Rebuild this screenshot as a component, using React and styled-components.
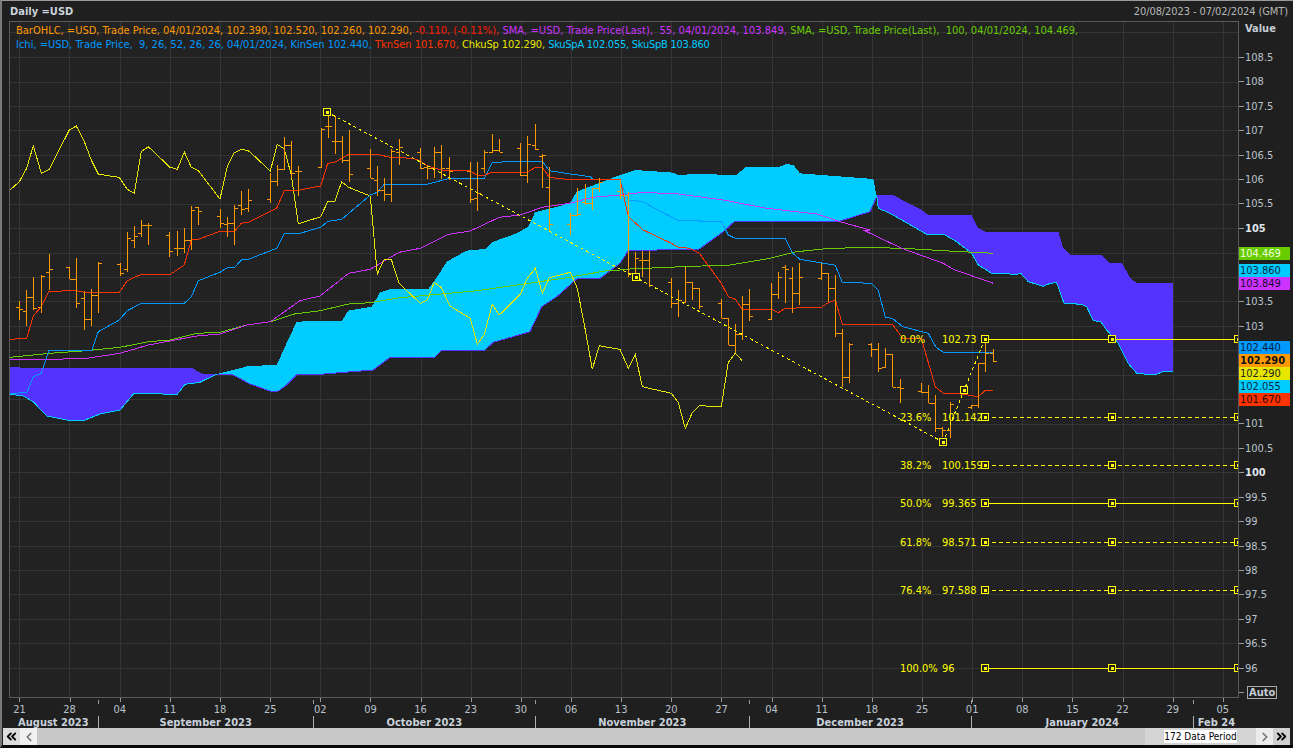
import React from 'react';
import styled, { createGlobalStyle } from 'styled-components';
import { ChevronLeft, ChevronRight, ChevronsLeft, ChevronsRight } from 'lucide-react';

const FONT = '"DejaVu Sans Condensed", "DejaVu Sans", sans-serif';
const ORANGE = '#ff9900';
const RED = '#ff3300';
const YELLOW = '#e6e600';
const BLUE = '#0099ff';
const CYAN = '#00ccff';
const VIOLET = '#cc33ff';
const GREEN = '#66cc00';
const CLOUD = '#5533ff';
const HANDLE = '#ffff00';

// the points were read off 3x crops, so each group has its own origin
const crop = (ox, oy) => (pts) => pts.map(([x, y]) => [x / 3 + ox, y / 3 + oy]);
const a = crop(0, 100);
const b = crop(300, 100);
const c = crop(610, 160);
const d = crop(830, 230);
const e = crop(870, 185);
const f = crop(1100, 230);

const priceY = (p) => 325.8 + (103 - p) * 48.85;
const toPath = (pts) => pts.map(([x, y], i) => `${i ? 'L' : 'M'}${x.toFixed(1)} ${y.toFixed(1)}`).join(' ');

const chikou = [
  ...a([[30, 270], [58, 245], [80, 205], [100, 137], [124, 220], [148, 208], [208, 90], [229, 78], [253, 125], [274, 180], [295, 222], [330, 228], [358, 232], [382, 268], [403, 280], [424, 155], [445, 140], [510, 202], [532, 208], [553, 156], [574, 202], [595, 212], [660, 297], [682, 200], [703, 158], [724, 148], [745, 152], [765, 170], [811, 213], [832, 133], [853, 147], [874, 225], [895, 372]]),
  ...b([[0, 370], [62, 350], [83, 305], [104, 305], [125, 245], [146, 262], [211, 288], [232, 522], [253, 477], [274, 478], [297, 550], [361, 610], [382, 600], [403, 547], [424, 563], [450, 618], [511, 655], [532, 733], [553, 703], [577, 613], [598, 645], [661, 583], [682, 535], [706, 505], [727, 580], [748, 533], [811, 517], [832, 565], [856, 690], [877, 808], [898, 737]]),
  ...c([[0, 563], [30, 568], [55, 625], [76, 583], [97, 680], [184, 700], [205, 728], [226, 805], [247, 758], [268, 737], [334, 740], [355, 607], [376, 580], [397, 602]]),
];

const kijun = [
  ...a([[30, 880], [80, 878], [100, 830], [124, 820], [146, 752], [275, 752], [295, 695], [358, 660], [382, 632], [424, 610], [553, 610], [574, 590], [595, 542], [660, 517], [682, 503], [703, 503], [724, 480], [745, 478], [830, 445], [853, 400], [900, 400]]),
  ...b([[0, 400], [62, 382], [83, 364], [125, 358], [211, 285], [232, 277], [253, 253], [382, 253], [430, 240], [448, 235], [553, 235], [577, 187], [598, 187], [630, 184], [727, 184], [748, 212], [811, 222], [870, 230], [880, 238]]),
  ...c([[30, 60], [55, 120], [97, 125], [205, 182], [334, 184], [355, 225], [376, 235], [526, 235], [548, 280], [570, 298], [676, 316], [697, 367]]),
  ...d([[37, 157], [124, 160], [145, 180], [166, 262], [187, 265], [218, 290], [295, 310], [318, 352], [340, 367], [490, 368]]),
];

const tenkan = [
  ...a([[30, 718], [80, 715], [100, 648], [124, 620], [146, 574], [230, 572], [253, 577], [358, 577], [382, 542], [424, 523], [511, 523], [553, 495], [574, 420], [595, 418], [660, 394], [703, 394], [724, 370], [745, 367], [830, 325], [853, 272], [900, 270]]),
  ...b([[0, 270], [62, 258], [83, 190], [104, 187], [146, 163], [232, 163], [270, 172], [340, 175], [361, 183], [382, 198], [424, 210], [511, 213], [532, 226], [553, 226], [577, 216], [682, 216], [706, 202], [727, 202], [748, 232], [800, 238], [960, 238]]),
  ...c([[30, 58], [55, 170], [100, 210], [184, 250], [205, 262], [240, 265], [268, 280], [334, 370], [355, 410], [376, 418], [397, 448], [484, 448], [505, 458], [526, 445], [634, 442], [655, 428], [676, 420], [697, 493]]),
  ...d([[37, 283], [187, 283], [218, 325], [274, 325], [316, 470], [340, 490], [380, 490], [445, 500], [466, 481], [490, 481]]),
];

const sma55 = [
  ...a([[30, 778], [90, 780], [260, 775], [360, 760], [445, 735], [590, 708], [660, 702], [740, 675], [811, 665], [900, 602]]),
  ...b([[0, 602], [60, 588], [146, 520], [211, 508], [297, 457], [361, 445], [446, 403], [511, 393], [598, 352], [661, 345], [727, 322], [811, 310], [877, 292], [960, 285]]),
  ...c([[90, 98], [190, 100], [340, 120], [470, 145], [620, 162], [690, 185], [780, 210]]),
  ...d([[100, 0], [215, 55], [340, 100], [370, 118], [490, 160]]),
];

const sma100 = [
  ...a([[30, 772], [150, 760], [260, 752], [360, 742], [445, 725], [511, 720], [590, 700], [660, 697], [740, 675], [811, 665], [890, 640]]),
  ...b([[0, 640], [60, 632], [146, 612], [211, 608], [300, 593], [532, 572], [790, 535], [920, 512], [960, 510]]),
  ...c([[60, 327], [216, 320], [360, 315], [480, 295], [560, 275], [660, 265], [810, 262]]),
  ...d([[90, 52], [220, 55], [340, 62], [490, 70]]),
];

const cloudOneTop = a([[10, 800], [70, 803], [575, 803], [590, 812], [610, 822], [650, 822]]);
const cloudOneBottom = a([[10, 880], [70, 888], [100, 905], [140, 948], [200, 960], [255, 960], [300, 942], [360, 930], [400, 882], [460, 880], [530, 885], [555, 853], [600, 847], [650, 822]]);

const cloudTwoTop = [
  ...a([[650, 822], [700, 810], [745, 798], [830, 795], [855, 740], [890, 665], [960, 663]]),
  ...b([[125, 663], [145, 632], [215, 620], [240, 578], [270, 567], [385, 567], [412, 530], [440, 485], [500, 452], [555, 447], [580, 425], [650, 400], [685, 380], [705, 337], [810, 310], [830, 275], [960, 225]]),
  ...c([[75, 30], [190, 38], [205, 45], [260, 42], [380, 45], [405, 22], [510, 20], [530, 12], [550, 15], [570, 40], [790, 57], [800, 110]]),
];
const cloudTwoBottom = [
  ...a([[650, 822], [700, 825], [750, 852], [810, 873], [835, 873], [860, 855], [890, 825], [960, 823]]),
  ...b([[220, 810], [270, 772], [405, 772], [425, 750], [555, 750], [580, 727], [690, 695], [725, 620], [770, 590], [830, 537], [900, 535], [960, 490]]),
  ...c([[55, 272], [268, 267], [340, 215], [375, 183], [690, 183], [780, 155], [800, 110]]),
];

const cloudThreeTop = [
  ...e([[20, 30], [70, 30], [100, 47], [155, 75], [175, 90], [305, 90], [325, 130], [345, 140], [565, 140], [580, 190], [600, 210], [695, 210], [720, 235]]),
  ...f([[20, 98], [65, 98], [90, 143], [108, 158], [218, 158], [218, 424]]),
];
const cloudThreeBottom = [
  ...e([[20, 30], [25, 70], [60, 85], [170, 148], [225, 150], [260, 170], [305, 205], [325, 240], [365, 265], [415, 266], [435, 270], [452, 265], [475, 290], [520, 304], [540, 295], [560, 293], [582, 355], [635, 358], [650, 365], [670, 407], [692, 410], [715, 442]]),
  ...f([[20, 300], [55, 340], [85, 400], [110, 430], [165, 435], [190, 424], [218, 424]]),
];

// x, high, low, open, close
const bars = [
  ...[
    [58, 603, 660, 620, 628], [79, 570, 678, 632, 590], [100, 530, 630, 590, 625], [124, 525, 640, 622, 527], [146, 462, 570, 517, 508],
    [208, 502, 537, 502, 537], [229, 474, 623, 537, 610], [253, 573, 690, 595, 658], [274, 566, 678, 658, 586], [295, 487, 638, 586, 490],
    [360, 490, 527, 492, 518], [382, 396, 515, 508, 415], [403, 378, 443, 421, 408], [424, 360, 412, 400, 375], [445, 370, 435, 375, 376],
    [508, 396, 470, 406, 454], [532, 393, 468, 445, 445], [553, 385, 460, 445, 420], [574, 318, 450, 420, 330], [595, 322, 375, 322, 332],
    [661, 327, 383, 347, 368], [682, 350, 410, 372, 368], [703, 315, 435, 368, 325], [724, 273, 345, 316, 328], [745, 267, 335, 325, 300],
    [811, 220, 308, 298, 244], [832, 195, 258, 244, 208], [853, 112, 210, 206, 135], [874, 123, 235, 135, 220], [895, 198, 288, 212, 212],
  ].map(([x, ...r]) => [x / 3, ...r.map((v) => v / 3 + 100)]),
  ...[
    [62, 85, 200, 200, 88], [83, 45, 115, 78, 78], [104, 48, 162, 123, 123], [125, 108, 188, 122, 180], [146, 90, 245, 180, 223],
    [211, 147, 233, 205, 233], [232, 198, 287, 240, 270], [253, 235, 302, 270, 282], [274, 148, 305, 282, 152], [297, 118, 195, 155, 140],
    [361, 145, 208, 155, 205], [382, 195, 236, 200, 205], [403, 140, 235, 205, 157], [424, 135, 238, 157, 205], [448, 170, 240, 205, 212],
    [511, 186, 308, 212, 297], [532, 186, 332, 295, 280], [553, 150, 220, 205, 155], [577, 102, 160, 155, 150], [598, 117, 157, 150, 155],
    [661, 130, 228, 145, 225], [682, 108, 250, 225, 132], [706, 72, 150, 135, 148], [727, 162, 265, 168, 165], [748, 202, 395, 260, 372],
    [811, 340, 405, 372, 345], [832, 265, 345, 345, 342], [856, 252, 315, 305, 310], [877, 265, 330, 310, 265], [898, 235, 275, 265, 245],
  ].map(([x, ...r]) => [x / 3 + 300, ...r.map((v) => v / 3 + 100)]),
  ...[
    [30, 60, 118, 92, 105], [55, 95, 350, 105, 340], [76, 275, 360, 340, 295], [97, 272, 350, 300, 300], [118, 272, 380, 300, 375],
    [184, 355, 443, 365, 430], [205, 390, 472, 430, 420], [226, 320, 430, 425, 367], [247, 367, 420, 367, 385], [268, 385, 447, 385, 437],
    [334, 418, 475, 430, 475], [355, 478, 555, 475, 555], [376, 492, 580, 555, 523], [397, 408, 540, 523, 432], [418, 388, 482, 432, 467],
    [484, 370, 478, 478, 403], [505, 337, 418, 403, 352], [526, 316, 430, 322, 328], [547, 322, 460, 355, 398], [568, 310, 435, 398, 352],
    [634, 310, 360, 355, 338], [655, 338, 425, 338, 383], [676, 345, 530, 383, 520], [697, 508, 680, 520, 650], [718, 550, 668, 650, 553],
  ].map(([x, ...r]) => [x / 3 + 610, ...r.map((v) => v / 3 + 160)]),
  ...[
    [124, 340, 380, 342, 357], [145, 340, 425, 357, 413], [166, 353, 412, 410, 372], [187, 372, 472, 372, 470], [211, 448, 518, 470, 475],
    [274, 460, 490, 482, 485], [295, 465, 518, 485, 518], [316, 495, 607, 518, 595], [337, 590, 620, 595, 600], [361, 515, 625, 600, 522],
    [424, 525, 537, 530, 525], [445, 400, 533, 525, 400], [466, 340, 425, 400, 368], [490, 357, 395, 370, 392],
  ].map(([x, ...r]) => [x / 3 + 830, ...r.map((v) => v / 3 + 230)]),
];

const barPath = bars
  .map(([x, hi, lo, o, cl]) => {
    const px = Math.round(x) + 0.5;
    const oy = Math.round(o) + 0.5;
    const cy = Math.round(cl) + 0.5;
    return `M${px} ${hi.toFixed(0)}V${lo.toFixed(0)}M${px - 3.5} ${oy}H${px}M${px} ${cy}H${px + 3.5}`;
  })
  .join('');

const fibLevels = [
  { pct: '0.0%', value: '102.73', price: 102.73, solid: true },
  { pct: '23.6%', value: '101.142', price: 101.142 },
  { pct: '38.2%', value: '100.159', price: 100.159 },
  { pct: '50.0%', value: '99.365', price: 99.365, solid: true },
  { pct: '61.8%', value: '98.571', price: 98.571 },
  { pct: '76.4%', value: '97.588', price: 97.588 },
  { pct: '100.0%', value: '96', price: 96, solid: true },
];

// the price tags sit where 104.5, 104, 102.5, 102 and 101.5 would be
const tickValues = ['108.5', '108', '107.5', '107', '106.5', '106', '105.5', '105', '', '', '103.5', '103', '', '', '', '101', '100.5', '100', '99.5', '99', '98.5', '98', '97.5', '97', '96.5', '96'];
const dayLabels = ['21', '28', '04', '11', '18', '25', '02', '09', '16', '23', '30', '06', '13', '20', '27', '04', '11', '18', '25', '01', '08', '15', '22', '29', '05'];
const months = [
  { name: 'August 2023', width: 89.7 },
  { name: 'September 2023', width: 215 },
  { name: 'October 2023', width: 222.3 },
  { name: 'November 2023', width: 213.6 },
  { name: 'December 2023', width: 222 },
  { name: 'January 2024', width: 222.4 },
  { name: 'Feb 24', width: 45, last: true },
];
const priceTags = [
  { top: 226, label: '104.469', bg: GREEN, fg: '#f4ffe0' },
  { top: 243, label: '103.860', bg: CYAN, fg: '#0a2a44' },
  { top: 256, label: '103.849', bg: VIOLET, fg: '#1c0a30' },
  { top: 320, label: '102.440', bg: BLUE, fg: '#06203a' },
  { top: 333, label: '102.290', bg: ORANGE, fg: '#111', bold: true },
  { top: 346, label: '102.290', bg: YELLOW, fg: '#222' },
  { top: 359, label: '102.055', bg: CYAN, fg: '#0a2a44' },
  { top: 372, label: '101.670', bg: RED, fg: '#2a0a00' },
];

const GlobalStyle = createGlobalStyle`
  html, body {
    margin: 0;
    padding: 0;
    background: #1f1f1f;
  }
`;

const Page = styled.div`
  width: 1293px;
  height: 748px;
  box-sizing: border-box;
  border-top: 1px solid #9a9a9a;
  border-left: 2px solid #7a7a7a;
  border-bottom: 3px solid #0a0a0a;
  background: #1f1f1f;
  font-family: ${FONT};
  overflow: hidden;
  display: flex;
  flex-direction: column;
`;

const TitleBar = styled.div`
  height: 20px;
  padding: 0 5px 0 8px;
  display: flex;
  align-items: center;
  justify-content: space-between;
`;

const TitleText = styled.span`
  font-size: 11px;
  font-weight: bold;
  color: #c9d2da;
`;

const RangeText = styled.span`
  font-size: 11px;
  letter-spacing: -0.1px;
  color: #b8b8b8;
`;

const ChartRow = styled.div`
  height: 677px;
  display: flex;
`;

const Plot = styled.div`
  position: relative;
  margin-left: 7px;
  width: 1230px;
  height: 677px;
  box-sizing: border-box;
  border: 1px solid #5a5a5a;
  background: #222222;
`;

const ChartSvg = styled.svg`
  display: block;
  width: 1228px;
  height: 675px;
`;

const Legend = styled.div`
  position: absolute;
  left: 6px;
  top: 2px;
  font-size: 11px;
  line-height: 14px;
  white-space: pre;
`;

const LegendRow = styled.div`
  display: flex;
`;

const Ink = styled.span`
  color: ${(p) => p.$c};
  letter-spacing: ${(p) => p.$track || 0}px;
`;

const ValueAxis = styled.div`
  position: relative;
  flex: 1;
`;

const AxisHeader = styled.div`
  height: 24.1px;
  padding: 1px 0 0 6px;
  box-sizing: border-box;
  font-size: 11px;
  font-weight: bold;
  color: #c4ccd4;
`;

const Tick = styled.div`
  height: 24.45px;
  display: flex;
  align-items: center;
  gap: 1px;
  font-size: 11px;
  font-weight: ${(p) => (p.$major ? 'bold' : 'normal')};
  color: ${(p) => (p.$major ? '#dfe5ea' : '#b9c2ca')};

  &::before {
    content: '';
    width: 5px;
    height: 1px;
    background: #9a9a9a;
  }
`;

const AutoBox = styled.span`
  margin-left: 2px;
  padding: 0 1px;
  border: 1px solid #a8a8a8;
  line-height: 11px;
  font-size: 11px;
  font-weight: bold;
  color: #c4ccd4;
`;

const PriceTag = styled.div`
  position: absolute;
  left: 0;
  top: ${(p) => p.$top}px;
  width: 51px;
  height: 13px;
  padding-left: 1px;
  box-sizing: border-box;
  background: ${(p) => p.$bg};
  color: ${(p) => p.$fg};
  font-size: 11px;
  line-height: 13px;
  font-weight: ${(p) => (p.$bold ? 'bold' : 'normal')};
`;

const DateAxis = styled.div`
  height: 30px;
`;

const DayRow = styled.div`
  height: 18px;
  margin-left: -7.6px;
  display: flex;
`;

const Day = styled.div`
  position: relative;
  flex: 0 0 50.15px;
  padding-top: 6px;
  text-align: center;
  font-size: 11px;
  line-height: 12px;
  color: #b9c2ca;

  &::before {
    content: '';
    position: absolute;
    left: 25px;
    top: 0;
    width: 1px;
    height: 4px;
    background: #9a9a9a;
  }
`;

const MonthRow = styled.div`
  height: 12px;
  padding-left: 7px;
  display: flex;
`;

const Month = styled.div`
  position: relative;
  flex: 0 0 ${(p) => p.$width}px;
  box-sizing: border-box;
  border-right: ${(p) => (p.$last ? 'none' : '1px solid #b0b0b0')};
  text-align: center;
  font-size: 11px;
  line-height: 13px;
  font-weight: bold;
  color: #c9d2da;
  white-space: nowrap;

  &::after {
    content: ${(p) => (p.$last ? 'none' : "''")};
    position: absolute;
    right: -1px;
    top: -16px;
    width: 1px;
    height: 4px;
    background: #9a9a9a;
  }
`;

const Scroller = styled.div`
  height: 17px;
  margin: 0 3px 0 1px;
  display: flex;
  background: #c8c8c8;
`;

const ScrollButton = styled.div`
  flex: 0 0 17px;
  display: flex;
  align-items: center;
  justify-content: center;
  background: ${(p) => p.$bg};
  color: ${(p) => p.$fg};
`;

const Trough = styled.div`
  flex: 1;
`;

const PeriodBox = styled.div`
  flex: 0 0 111px;
  display: flex;
  align-items: center;
  padding-left: 19px;
  box-sizing: border-box;
  background: #d4d4d4;
`;

const PeriodLabel = styled.span`
  width: 73px;
  background: #fff;
  color: #000;
  font-family: ${FONT};
  font-size: 10px;
  line-height: 13px;
  text-align: center;
  white-space: nowrap;
`;

const Handle = ({ x, y }) => (
  <g shapeRendering="crispEdges">
    <rect x={Math.round(x) - 3.5} y={Math.round(y) - 3.5} width={7} height={7} fill="#222" stroke={HANDLE} />
    <rect x={Math.round(x) - 1} y={Math.round(y) - 1} width={3} height={3} fill={HANDLE} />
  </g>
);

const Line = ({ pts, color }) => (
  <path d={toPath(pts)} fill="none" stroke={color} strokeWidth={1} shapeRendering="crispEdges" />
);

const Cloud = ({ top, bottom, fill, edge }) => (
  <g shapeRendering="crispEdges">
    <polygon points={[...top, ...[...bottom].reverse()].map((p) => p.join(',')).join(' ')} fill={fill} />
    <path d={toPath(bottom)} fill="none" stroke={edge} />
  </g>
);

const grid = () => {
  const lines = [];
  for (let k = 0; k < 25; k++) {
    const x = Math.round(19.3 + 50.15 * k) + 0.5;
    lines.push(<line key={`v${k}`} x1={x} x2={x} y1={22} y2={697} />);
  }
  for (let p = 108.5; p >= 96; p -= 0.5) {
    const y = Math.round(priceY(p)) + 0.5;
    lines.push(<line key={`h${p}`} x1={10} x2={1238} y1={y} y2={y} />);
  }
  // the row above the 108.5 line
  lines.push(<line key="h109" x1={10} x2={1238} y1={32.5} y2={32.5} />);
  return lines;
};

const App = () => (
  <>
    <GlobalStyle />
    <Page>
      <TitleBar>
        <TitleText>Daily =USD</TitleText>
        <RangeText>20/08/2023 - 07/02/2024 (GMT)</RangeText>
      </TitleBar>

      <ChartRow>
        <Plot>
          <ChartSvg viewBox="10 22 1228 675">
            <g stroke="#343434" shapeRendering="crispEdges">{grid()}</g>
            <Cloud top={cloudOneTop} bottom={cloudOneBottom} fill={CLOUD} edge={CYAN} />
            <Cloud top={cloudTwoTop} bottom={cloudTwoBottom} fill={CYAN} edge={CLOUD} />
            <Cloud top={cloudThreeTop} bottom={cloudThreeBottom} fill={CLOUD} edge={CYAN} />
            <Line pts={sma100} color={GREEN} />
            <Line pts={sma55} color={VIOLET} />
            <Line pts={chikou} color={YELLOW} />
            <Line pts={kijun} color={BLUE} />
            <Line pts={tenkan} color={RED} />
            <path d={barPath} fill="none" stroke={ORANGE} shapeRendering="crispEdges" />

            <g stroke={HANDLE} fill="none" shapeRendering="crispEdges">
              <line x1={327} y1={112} x2={943} y2={442} strokeDasharray="3 3" />
              <line x1={943} y1={442} x2={985} y2={339} strokeDasharray="3 3" />
              {fibLevels.map((l) => {
                const y = Math.round(priceY(l.price)) + 0.5;
                return <line key={l.pct} x1={985} x2={1238} y1={y} y2={y} strokeDasharray={l.solid ? undefined : '4 3'} />;
              })}
            </g>
            <Handle x={327} y={112} />
            <Handle x={636} y={277} />
            <Handle x={943} y={442} />
            <Handle x={964} y={390} />
            {fibLevels.map((l) => (
              <g key={l.pct}>
                <Handle x={985} y={priceY(l.price)} />
                <Handle x={1112} y={priceY(l.price)} />
                <Handle x={1238} y={priceY(l.price)} />
                <text x={900} y={priceY(l.price) + 4} fill={HANDLE} fontSize={11} fontFamily={FONT}>{l.pct}</text>
                <text x={942} y={priceY(l.price) + 4} fill={HANDLE} fontSize={11} fontFamily={FONT}>{l.value}</text>
              </g>
            ))}
          </ChartSvg>

          <Legend>
            <LegendRow>
              <Ink $c={ORANGE}>BarOHLC, =USD, Trade Price, 04/01/2024, 102.390, 102.520, 102.260, 102.290, </Ink>
              <Ink $c="#ff1a00">-0.110, (-0.11%), </Ink>
              <Ink $c={VIOLET} $track={0.05}>SMA, =USD, Trade Price(Last),  55, 04/01/2024, 103.849, </Ink>
              <Ink $c={GREEN}>SMA, =USD, Trade Price(Last),  100, 04/01/2024, 104.469,</Ink>
            </LegendRow>
            <LegendRow>
              <Ink $c={BLUE}>Ichi, =USD, Trade Price,  9, 26, 52, 26, 26, 04/01/2024, KinSen 102.440, </Ink>
              <Ink $c={RED}>TknSen 101.670, </Ink>
              <Ink $c={YELLOW} $track={-0.1}>ChkuSp 102.290, </Ink>
              <Ink $c={CYAN} $track={-0.25}>SkuSpA 102.055, SkuSpB 103.860</Ink>
            </LegendRow>
          </Legend>
        </Plot>

        <ValueAxis>
          <AxisHeader>Value</AxisHeader>
          {tickValues.map((t, i) => (
            <Tick key={i} $major={t === '105' || t === '100'}>{t}</Tick>
          ))}
          <Tick><AutoBox>Auto</AutoBox></Tick>
          {priceTags.map((t) => (
            <PriceTag key={`${t.top}`} $top={t.top} $bg={t.bg} $fg={t.fg} $bold={t.bold}>{t.label}</PriceTag>
          ))}
        </ValueAxis>
      </ChartRow>

      <DateAxis>
        <DayRow>
          {dayLabels.map((l, i) => <Day key={i}>{l}</Day>)}
        </DayRow>
        <MonthRow>
          {months.map((m) => (
            <Month key={m.name} $width={m.width} $last={m.last}>{m.name}</Month>
          ))}
        </MonthRow>
      </DateAxis>

      <Scroller>
        <ScrollButton $bg="#dcdcdc" $fg="#000"><ChevronsLeft size={15} strokeWidth={3} /></ScrollButton>
        <ScrollButton $bg="#f0f0f0" $fg="#777"><ChevronLeft size={14} strokeWidth={3} /></ScrollButton>
        <Trough />
        <PeriodBox><PeriodLabel>172 Data Period</PeriodLabel></PeriodBox>
        <ScrollButton $bg="#ececec" $fg="#777"><ChevronRight size={14} strokeWidth={3} /></ScrollButton>
        <ScrollButton $bg="#d0d0d0" $fg="#000"><ChevronsRight size={15} strokeWidth={3} /></ScrollButton>
      </Scroller>
    </Page>
  </>
);

export default App;
